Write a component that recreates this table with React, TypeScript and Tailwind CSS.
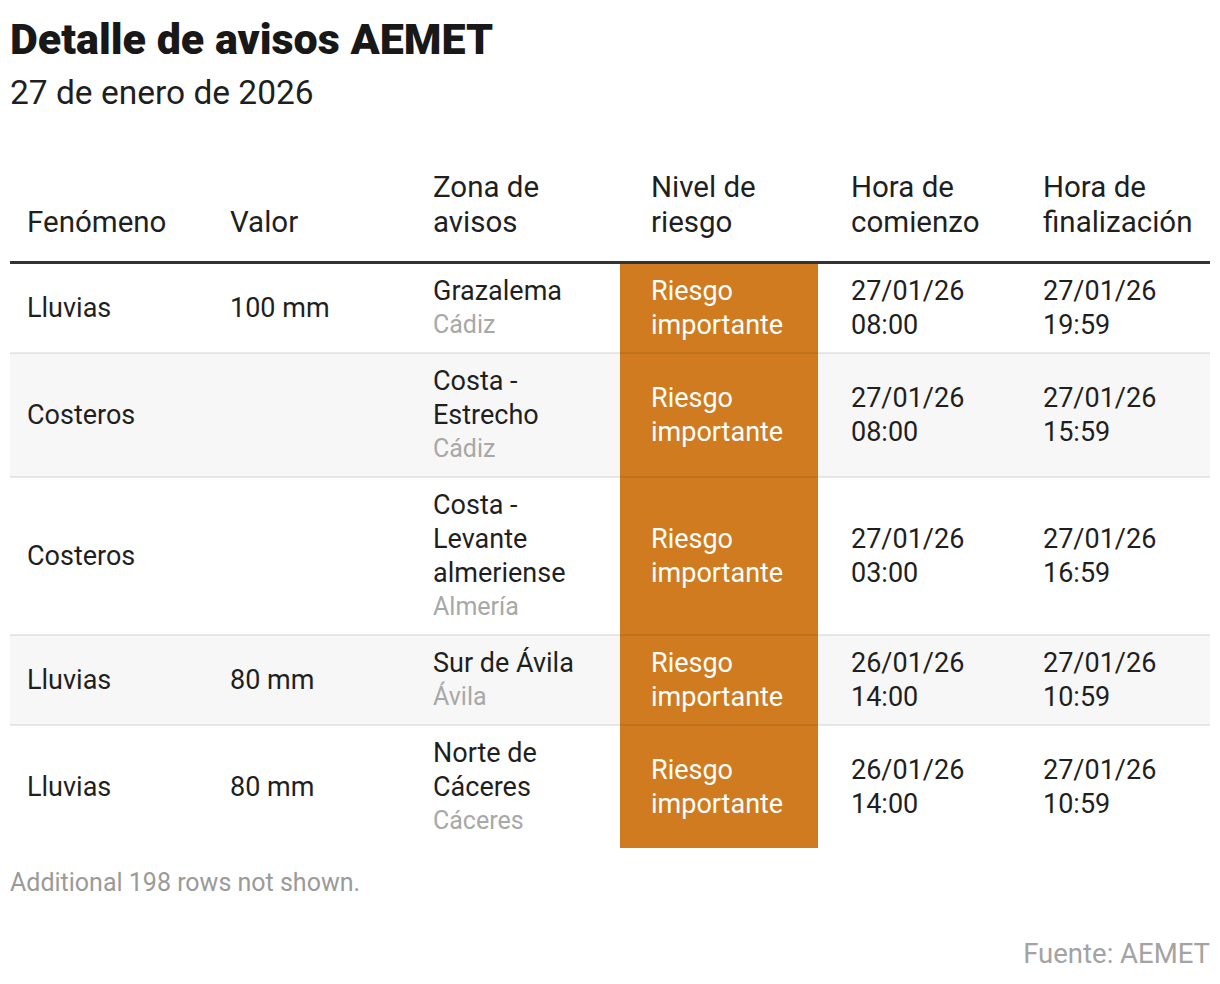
import React from "react";

type Row = {
  fen: string;
  valor: string;
  zona: string[];
  prov: string;
  ini: [string, string];
  fin: [string, string];
};

const rows: Row[] = [
  { fen: "Lluvias", valor: "100 mm", zona: ["Grazalema"], prov: "Cádiz", ini: ["27/01/26", "08:00"], fin: ["27/01/26", "19:59"] },
  { fen: "Costeros", valor: "", zona: ["Costa -", "Estrecho"], prov: "Cádiz", ini: ["27/01/26", "08:00"], fin: ["27/01/26", "15:59"] },
  { fen: "Costeros", valor: "", zona: ["Costa -", "Levante", "almeriense"], prov: "Almería", ini: ["27/01/26", "03:00"], fin: ["27/01/26", "16:59"] },
  { fen: "Lluvias", valor: "80 mm", zona: ["Sur de Ávila"], prov: "Ávila", ini: ["26/01/26", "14:00"], fin: ["27/01/26", "10:59"] },
  { fen: "Lluvias", valor: "80 mm", zona: ["Norte de", "Cáceres"], prov: "Cáceres", ini: ["26/01/26", "14:00"], fin: ["27/01/26", "10:59"] },
];

const font = { fontFamily: "Roboto, 'Liberation Sans', sans-serif" };

export default function App() {
  return (
    <div className="w-[1220px] h-[984px] bg-white px-[10px] text-[#1f1f1f] flex flex-col" style={font}>
      <h1 className="pt-[15px] text-[43px] leading-[48px] font-black text-[#181818]">
        Detalle de avisos AEMET
      </h1>
      <p className="mt-[10px] text-[33.5px] leading-[40px] text-[#1f1f1f]">27 de enero de 2026</p>

      <table className="mt-[57px] w-[1200px] border-collapse table-fixed text-[27px] leading-[34px]">
        <colgroup>
          <col className="w-[203px]" />
          <col className="w-[203px]" />
          <col className="w-[204px]" />
          <col className="w-[198px]" />
          <col className="w-[208px]" />
          <col className="w-[184px]" />
        </colgroup>
        <thead>
          <tr className="border-b-[3px] border-[#333333] text-[29.5px] leading-[35px]">
            <th className="pl-[17px] pb-[21px] align-bottom text-left font-normal">Fenómeno</th>
            <th className="pl-[17px] pb-[21px] align-bottom text-left font-normal">Valor</th>
            <th className="pl-[17px] pb-[21px] align-bottom text-left font-normal">Zona de<br />avisos</th>
            <th className="pl-[31px] pb-[21px] align-bottom text-left font-normal">Nivel de<br />riesgo</th>
            <th className="pl-[33px] pb-[21px] align-bottom text-left font-normal whitespace-nowrap">Hora de<br />comienzo</th>
            <th className="pl-[17px] pb-[21px] align-bottom text-left font-normal whitespace-nowrap">Hora de<br />finalización</th>
          </tr>
        </thead>
        <tbody>
          {rows.map((r, i) => (
            <tr
              key={i}
              className={`${i % 2 === 1 ? "bg-[#f7f7f7]" : "bg-white"} ${i < rows.length - 1 ? "border-b-2 border-black/[0.08]" : ""}`}
            >
              <td className="pl-[17px] py-[10px] align-middle">{r.fen}</td>
              <td className="pl-[17px] py-[10px] align-middle">{r.valor}</td>
              <td className="pl-[17px] py-[10px] align-middle">
                {r.zona.map((z, k) => (
                  <div key={k}>{z}</div>
                ))}
                <div className="text-[25px] text-[#a8a8a8]">{r.prov}</div>
              </td>
              <td className="pl-[31px] py-[10px] align-middle bg-[#d07b1f] text-white">
                <div>Riesgo</div>
                <div>importante</div>
              </td>
              <td className="pl-[33px] py-[10px] align-middle">
                <div>{r.ini[0]}</div>
                <div>{r.ini[1]}</div>
              </td>
              <td className="pl-[17px] py-[10px] align-middle">
                <div>{r.fin[0]}</div>
                <div>{r.fin[1]}</div>
              </td>
            </tr>
          ))}
        </tbody>
      </table>

      <p className="mt-[20px] text-[25px] leading-[30px] text-[#9a9a9a]">Additional 198 rows not shown.</p>
      <p className="mt-[39px] text-right text-[27.5px] leading-[34px] text-[#a3a3a3]">Fuente: AEMET</p>
    </div>
  );
}
